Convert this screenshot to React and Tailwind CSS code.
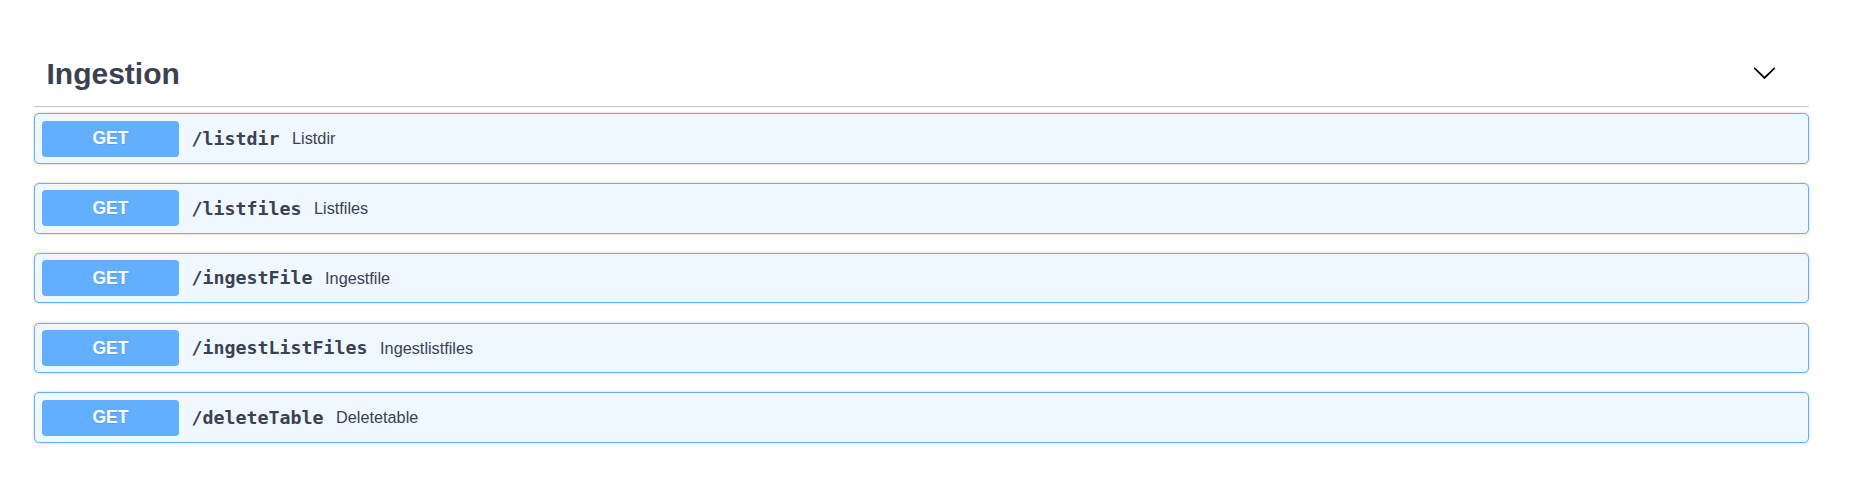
import React from "react";

const ops = [
  { path: "/listdir", desc: "Listdir" },
  { path: "/listfiles", desc: "Listfiles" },
  { path: "/ingestFile", desc: "Ingestfile" },
  { path: "/ingestListFiles", desc: "Ingestlistfiles" },
  { path: "/deleteTable", desc: "Deletetable" },
];

export default function App() {
  return (
    <div className="w-[1860px] h-[477px] bg-white pt-[42px] font-['Liberation_Sans',Arial,sans-serif] text-[#3b4151]">
      <div className="ml-[34px] w-[1775px]">
        <div className="flex items-center justify-between h-[65px] border-b border-[rgba(59,65,81,0.3)] pl-[12.5px] pr-[32px]">
          <h3 className="text-[30px] font-bold leading-none">Ingestion</h3>
          <svg width="25" height="25" viewBox="0 0 20 20" className="-mt-[3px]">
            <path
              fill="#000"
              d="M17.418 6.109c.272-.268.709-.268.979 0s.271.701 0 .969l-7.908 7.83c-.27.268-.707.268-.979 0l-7.908-7.83c-.27-.268-.27-.701 0-.969.271-.268.709-.268.979 0L10 13.25l7.418-7.141z"
            />
          </svg>
        </div>
        <div className="mt-[6.25px]">
          {ops.map((op) => (
            <div
              key={op.path}
              className="mb-[19.25px] rounded-[5px] border border-[#61affe] bg-[#eff7ff] shadow-[0_0_3px_rgba(0,0,0,0.19)] py-[6.25px] pl-[7px] pr-[6.25px] flex items-center"
            >
              <div className="w-[137px] h-[36px] rounded-[3.75px] bg-[#61affe] text-white font-bold text-[17.5px] flex items-center justify-center [text-shadow:0_1px_0_rgba(0,0,0,0.1)]">
                GET
              </div>
              <span className="px-[12.5px] font-['DejaVu_Sans_Mono',monospace] font-bold text-[18.3px] text-[#3b4151]">
                {op.path}
              </span>
              <span className="text-[16.25px] text-[#3b4151]">{op.desc}</span>
            </div>
          ))}
        </div>
      </div>
    </div>
  );
}
